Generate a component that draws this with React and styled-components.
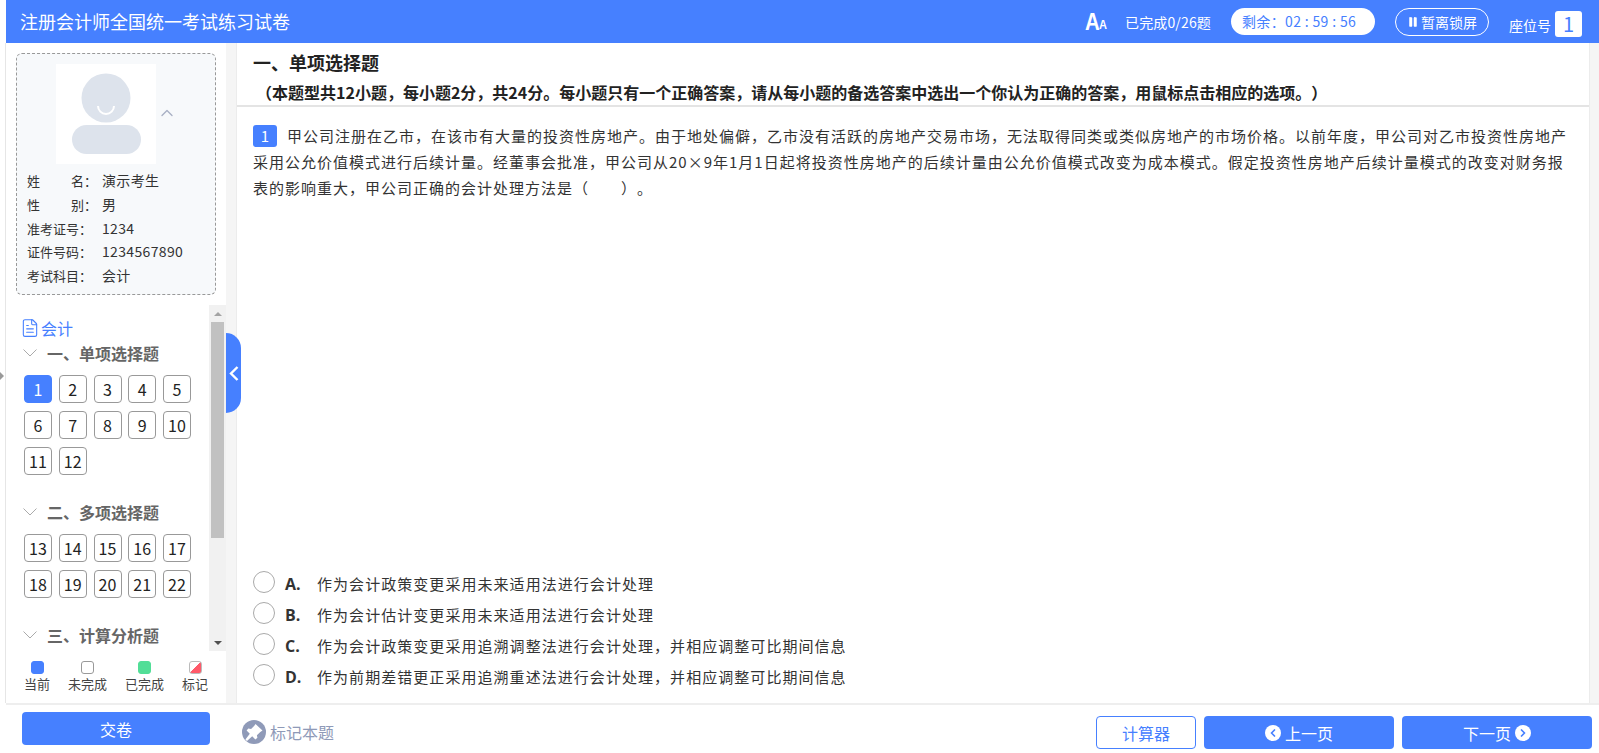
import React from 'react';
import styled, { createGlobalStyle } from 'styled-components';
import { ChevronUp, ChevronLeft, ChevronRight, FileText, Pause } from 'lucide-react';

const blue = '#4680ff';

const GlobalStyle = createGlobalStyle`
  html, body {
    margin: 0;
    padding: 0;
    background: #fff;
    font-family: "Noto Sans CJK SC", "Liberation Sans", sans-serif;
    color: #333;
    text-spacing-trim: space-all;
  }
  * { box-sizing: border-box; }
`;

const Page = styled.div`
  position: relative;
  width: 1599px;
  height: 753px;
  padding-left: 6px;
  display: flex;
  flex-direction: column;
  overflow: hidden;
  &::before {
    content: '';
    position: absolute;
    left: 5px;
    top: 43px;
    bottom: 50px;
    width: 1px;
    background: #e6e6e6;
  }
  &::after {
    content: '';
    position: absolute;
    left: 0;
    top: 372px;
    border-left: 4px solid #999;
    border-top: 4px solid transparent;
    border-bottom: 4px solid transparent;
  }
`;

const Header = styled.header`
  height: 43px;
  flex: none;
  background: ${blue};
  color: #fff;
  display: flex;
  align-items: center;
  padding: 0 17px 0 14px;
`;
const Title = styled.div`
  font-size: 18px;
  line-height: 43px;
  margin-right: auto;
`;
const FontToggle = styled.div`
  font-family: "Liberation Sans", sans-serif;
  font-weight: 700;
  font-size: 24px;
  display: flex;
  align-items: flex-end;
  width: 20px;
  line-height: 24px;
  margin-right: 20px;
  transform: scaleX(0.85);
  transform-origin: left center;
  span { font-size: 13px; line-height: 19px; margin-left: -1px; }
`;
const Progress = styled.div`
  font-size: 14px;
  letter-spacing: 0.15px;
  margin-right: 20px;
`;
const Timer = styled.div`
  width: 144px;
  height: 27px;
  border-radius: 14px;
  background: #fff;
  color: ${blue};
  font-size: 14px;
  letter-spacing: 0.35px;
  line-height: 27px;
  padding-left: 11px;
  margin-right: 20px;
  white-space: pre;
`;
const LockButton = styled.div`
  width: 94px;
  height: 28px;
  border: 1px solid #fff;
  border-radius: 14px;
  font-size: 14px;
  display: flex;
  align-items: center;
  justify-content: center;
  gap: 2px;
  margin-right: 20px;
  svg { fill: currentColor; }
`;
const SeatLabel = styled.div`
  font-size: 14px;
  margin-top: 6px;
  margin-right: 4px;
`;
const SeatNo = styled.div`
  width: 27px;
  height: 26px;
  margin-top: 4px;
  border-radius: 3px;
  background: #fff;
  color: ${blue};
  font-size: 20px;
  line-height: 26px;
  text-align: center;
`;

const Body = styled.div`
  flex: 1;
  min-height: 0;
  display: flex;
`;

const Sidebar = styled.aside`
  position: relative;
  width: 220px;
  flex: none;
  display: flex;
  flex-direction: column;
  background: #fff;
`;
const ProfileCard = styled.div`
  margin: 10px 10px 0 10px;
  height: 242px;
  flex: none;
  border: 1px dashed #999;
  border-radius: 6px;
  background: #f7f9fb;
  padding: 10px 10px 0;
`;
const PhotoRow = styled.div`
  display: flex;
  align-items: center;
  padding-left: 29px;
  height: 100px;
  color: #a9b0c4;
  svg:last-child { margin: 0 0 3px -2px; }
`;
const Photo = styled.svg`
  display: block;
  margin-right: 3px;
`;
const InfoList = styled.div`
  margin-top: 5px;
`;
const InfoRow = styled.div`
  display: flex;
  font-size: 14px;
  letter-spacing: 0.35px;
  line-height: 23.8px;
  color: #333;
`;
const InfoLabel = styled.span`
  width: 75px;
  display: flex;
  justify-content: space-between;
  padding-right: 5px;
  flex: none;
  font-size: 13px;
  letter-spacing: 0;
`;

const TreeWrap = styled.div`
  height: 346px;
  margin-top: 10px;
  flex: none;
  display: flex;
`;
const Tree = styled.div`
  flex: 1;
  overflow: hidden;
  padding: 13px 0 0 16px;
`;
const SubjectRow = styled.div`
  display: flex;
  align-items: center;
  gap: 1px;
  margin: 0 0 1px -2px;
  color: ${blue};
  font-size: 16px;
  line-height: 20px;
`;
const SectionName = styled.div`
  display: flex;
  align-items: center;
  gap: 10px;
  height: 26px;
  margin-top: ${p => p.$gap}px;
  padding: 2px 0 0 1px;
  font-size: 16px;
  font-weight: 700;
  color: #666;
`;
const Caret = styled.svg`
  display: block;
  flex: none;
  fill: none;
  stroke: #aaa;
  stroke-width: 1;
`;
const NumGrid = styled.div`
  display: grid;
  grid-template-columns: repeat(5, 28px);
  grid-auto-rows: 28px;
  column-gap: 6.75px;
  row-gap: 8px;
  margin: 10px 0 0 2px;
`;
const NumCell = styled.div`
  border: 1px solid ${p => (p.$active ? blue : '#999')};
  border-radius: 4px;
  background: ${p => (p.$active ? blue : '#fff')};
  color: ${p => (p.$active ? '#fff' : '#222')};
  font-size: 16px;
  line-height: 26px;
  text-align: center;
`;
const FakeScrollbar = styled.div`
  width: 17px;
  flex: none;
  background: #f1f1f1;
  display: flex;
  flex-direction: column;
  align-items: center;
`;
const ScrollArrow = styled.div`
  height: 17px;
  flex: none;
  display: flex;
  align-items: center;
  justify-content: center;
  &::before {
    content: '';
    border-left: 4px solid transparent;
    border-right: 4px solid transparent;
    ${p => (p.$down ? 'border-top: 4px solid #505050;' : 'border-bottom: 4px solid #a3a3a3;')}
  }
`;
const ScrollThumb = styled.div`
  width: 13px;
  height: 216px;
  margin-bottom: auto;
  background: #c1c1c1;
`;

const Legend = styled.div`
  flex: 1;
  display: flex;
  gap: 18px;
  padding: 10px 0 0 18px;
  font-size: 13px;
  color: #444;
`;
const LegendItem = styled.div`
  display: flex;
  flex-direction: column;
  align-items: center;
  line-height: 18px;
  gap: 1px;
`;
const LegendDot = styled.i`
  display: block;
  width: 13px;
  height: 13px;
  border-radius: 3px;
  border: 1px solid ${p => p.$border};
  background: ${p => p.$fill};
`;

const Gutter = styled.div`
  width: 11px;
  flex: none;
  background: #f5f5f5;
  border-right: 1px solid #ececec;
`;
const CollapseTab = styled.div`
  position: absolute;
  left: 220px;
  top: 290px;
  width: 15px;
  height: 80px;
  background: ${blue};
  border-radius: 0 15px 15px 0;
  display: flex;
  align-items: center;
  justify-content: center;
`;

const Main = styled.main`
  flex: 1;
  min-width: 0;
  display: flex;
  flex-direction: column;
`;
const MainHead = styled.div`
  height: 64px;
  flex: none;
  padding: 7px 0 0 16px;
  border-bottom: 2px solid #e4e4e4;
`;
const PartTitle = styled.div`
  font-size: 18px;
  font-weight: 700;
  line-height: 24px;
  color: #222;
`;
const PartNote = styled.div`
  font-size: 16px;
  font-weight: 700;
  line-height: 24px;
  margin-top: 6px;
  padding-left: 3px;
  color: #222;
`;
const QuestionArea = styled.div`
  flex: 1;
  min-height: 0;
  padding: 16px 16px 0 16px;
  display: flex;
  flex-direction: column;
  justify-content: space-between;
`;
const Stem = styled.div`
  font-size: 15px;
  letter-spacing: 1px;
  line-height: 26px;
  color: #333;
`;
const QNo = styled.span`
  display: inline-block;
  width: 24px;
  height: 22px;
  line-height: 22px;
  border-radius: 3px;
  background: ${blue};
  color: #fff;
  text-align: center;
  margin-right: 10px;
  letter-spacing: 0;
  font-size: 15px;
`;
const Options = styled.div`
  display: flex;
  flex-direction: column;
  gap: 9px;
  padding-bottom: 17px;
`;
const OptionRow = styled.div`
  display: flex;
  align-items: center;
  height: 22px;
  font-size: 15px;
  color: #333;
`;
const Radio = styled.span`
  width: 22px;
  height: 22px;
  border: 1px solid #aaa;
  border-radius: 50%;
  background: #fff;
  flex: none;
`;
const OptionKey = styled.b`
  padding-left: 10px;
  margin: 3px 10px 0 0;
  box-sizing: content-box;
  width: 22px;
  font-family: "Open Sans", "Liberation Sans", sans-serif;
  font-size: 16px;
  font-weight: 700;
  color: #333;
`;
const OptionText = styled.span`
  letter-spacing: 1.05px;
  margin-top: 2px;
`;
const RightStrip = styled.div`
  width: 10px;
  flex: none;
  background: #f5f5f5;
  border-left: 1px solid #ececec;
`;

const Footer = styled.footer`
  height: 50px;
  flex: none;
  border-top: 2px solid #eee;
  display: flex;
  align-items: flex-start;
  padding: 7px 7px 0 16px;
`;
const Btn = styled.div`
  height: 33px;
  border-radius: 4px;
  background: ${blue};
  color: #fff;
  font-size: 16px;
  display: flex;
  align-items: center;
  justify-content: center;
  gap: 4px;
  flex: none;
  width: ${p => p.$w}px;
`;
const SubmitBtn = styled(Btn)`
  margin-right: 32px;
`;
const MarkBtn = styled.div`
  display: flex;
  align-items: center;
  gap: 4px;
  height: 33px;
  margin-right: auto;
  margin-top: 3px;
  font-size: 16px;
  color: #8f9ab8;
`;
const PageBtn = styled(Btn)`
  margin-top: 4px;
  margin-left: 8px;
`;
const CalcBtn = styled(PageBtn)`
  background: #fff;
  border: 1px solid ${blue};
  color: ${blue};
`;
const RoundIcon = styled.span`
  width: 16px;
  height: 16px;
  border-radius: 50%;
  background: #fff;
  color: ${blue};
  display: flex;
  align-items: center;
  justify-content: center;
`;

const info = [
  ['姓', '名：', '演示考生'],
  ['性', '别：', '男'],
  ['准考证号：', '', '1234'],
  ['证件号码：', '', '1234567890'],
  ['考试科目：', '', '会计'],
];

const sections = [
  { name: '一、单项选择题', gap: 0, nums: [1, 2, 3, 4, 5, 6, 7, 8, 9, 10, 11, 12] },
  { name: '二、多项选择题', gap: 23, nums: [13, 14, 15, 16, 17, 18, 19, 20, 21, 22] },
  { name: '三、计算分析题', gap: 23, nums: [] },
];

const options = [
  ['A.', '作为会计政策变更采用未来适用法进行会计处理'],
  ['B.', '作为会计估计变更采用未来适用法进行会计处理'],
  ['C.', '作为会计政策变更采用追溯调整法进行会计处理，并相应调整可比期间信息'],
  ['D.', '作为前期差错更正采用追溯重述法进行会计处理，并相应调整可比期间信息'],
];

function App() {
  return (
    <Page>
      <GlobalStyle />
      <Header>
        <Title>注册会计师全国统一考试练习试卷</Title>
        <FontToggle>A<span>A</span></FontToggle>
        <Progress>已完成0/26题</Progress>
        <Timer>剩余：02 : 59 : 56</Timer>
        <LockButton><Pause size={12} strokeWidth={1} />暂离锁屏</LockButton>
        <SeatLabel>座位号</SeatLabel>
        <SeatNo>1</SeatNo>
      </Header>
      <Body>
        <Sidebar>
          <ProfileCard>
            <PhotoRow>
              <Photo width="100" height="100" viewBox="0 0 100 100">
                <rect width="100" height="100" fill="#fff" />
                <circle cx="50" cy="34" r="24.5" fill="#dde3ec" />
                <path d="M42 42a8 8 0 0 0 16 0" fill="none" stroke="#fff" strokeWidth="2" />
                <rect x="16" y="61" width="69" height="29" rx="14.5" fill="#dde3ec" />
              </Photo>
              <ChevronUp size={20} strokeWidth={1.6} />
            </PhotoRow>
            <InfoList>
              {info.map(([a, b, v]) => (
                <InfoRow key={a}>
                  <InfoLabel><span>{a}</span><span>{b}</span></InfoLabel>
                  <span>{v}</span>
                </InfoRow>
              ))}
            </InfoList>
          </ProfileCard>
          <TreeWrap>
            <Tree>
              <SubjectRow><FileText size={20} strokeWidth={1.3} />会计</SubjectRow>
              {sections.map(s => (
                <div key={s.name}>
                  <SectionName $gap={s.gap}>
                    <Caret width="14" height="8" viewBox="0 0 14 8"><path d="M.5.5 7 7 13.5.5" /></Caret>
                    {s.name}
                  </SectionName>
                  <NumGrid>
                    {s.nums.map(n => <NumCell key={n} $active={n === 1}>{n}</NumCell>)}
                  </NumGrid>
                </div>
              ))}
            </Tree>
            <FakeScrollbar>
              <ScrollArrow />
              <ScrollThumb />
              <ScrollArrow $down />
            </FakeScrollbar>
          </TreeWrap>
          <Legend>
            <LegendItem><LegendDot $border={blue} $fill={blue} />当前</LegendItem>
            <LegendItem><LegendDot $border="#999" $fill="#fff" />未完成</LegendItem>
            <LegendItem><LegendDot $border="#52de97" $fill="#52de97" />已完成</LegendItem>
            <LegendItem><LegendDot $border="#bbb" $fill="linear-gradient(135deg, #fff 50%, #ff5a6a 50%)" />标记</LegendItem>
          </Legend>
          <CollapseTab>
            <svg width="10" height="15" viewBox="0 0 10 15" fill="none" stroke="#fff" strokeWidth="2.4">
              <path d="M8.5 1 2 7.5 8.5 14" />
            </svg>
          </CollapseTab>
        </Sidebar>
        <Gutter />
        <Main>
          <MainHead>
            <PartTitle>一、单项选择题</PartTitle>
            <PartNote>（本题型共12小题，每小题2分，共24分。每小题只有一个正确答案，请从每小题的备选答案中选出一个你认为正确的答案，用鼠标点击相应的选项。）</PartNote>
          </MainHead>
          <QuestionArea>
            <Stem>
              <QNo>1</QNo>
              甲公司注册在乙市，在该市有大量的投资性房地产。由于地处偏僻，乙市没有活跃的房地产交易市场，无法取得同类或类似房地产的市场价格。以前年度，甲公司对乙市投资性房地产采用公允价值模式进行后续计量。经董事会批准，甲公司从20×9年1月1日起将投资性房地产的后续计量由公允价值模式改变为成本模式。假定投资性房地产后续计量模式的改变对财务报表的影响重大，甲公司正确的会计处理方法是（　　）。
            </Stem>
            <Options>
              {options.map(([k, t]) => (
                <OptionRow key={k}>
                  <Radio />
                  <OptionKey>{k}</OptionKey>
                  <OptionText>{t}</OptionText>
                </OptionRow>
              ))}
            </Options>
          </QuestionArea>
        </Main>
        <RightStrip />
      </Body>
      <Footer>
        <SubmitBtn $w={188}>交卷</SubmitBtn>
        <MarkBtn>
          <svg width="24" height="24" viewBox="0 0 24 24">
            <circle cx="12" cy="12" r="12" fill="#8f9ab8" />
            <path d="M13.5 4l7 6.5-2.2 1.4-3.4 3.3.5 2.6-2 1.7-3.2-3.2L5 21l-1.6-1.6 4.4-5.6-3.2-3.2 1.7-2 2.8.5 3.2-3.4z" fill="#fff" />
          </svg>
          标记本题
        </MarkBtn>
        <CalcBtn $w={100}>计算器</CalcBtn>
        <PageBtn $w={190}>
          <RoundIcon><ChevronLeft size={12} strokeWidth={3.5} /></RoundIcon>上一页
        </PageBtn>
        <PageBtn $w={190}>
          下一页<RoundIcon><ChevronRight size={12} strokeWidth={3.5} /></RoundIcon>
        </PageBtn>
      </Footer>
    </Page>
  );
}

export default App;
